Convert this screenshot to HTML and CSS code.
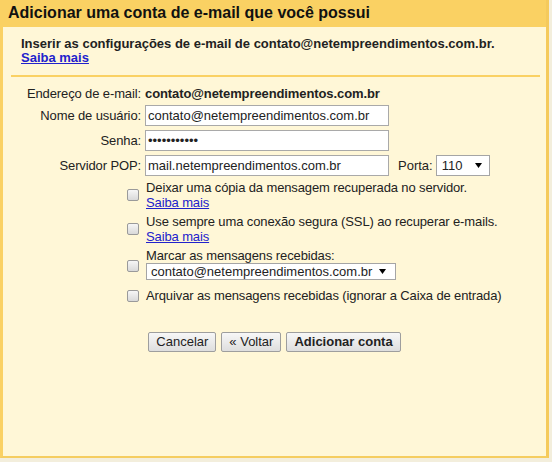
FILE: index.html
```html
<!DOCTYPE html>
<html lang="pt-BR">
<head>
<meta charset="utf-8">
<title>Adicionar uma conta de e-mail que você possui</title>
<link rel="stylesheet" href="styles.css">
</head>
<body>
<div class="dialog">
  <div class="dialog-header">Adicionar uma conta de e-mail que você possui</div>
  <div class="dialog-body">
    <div class="intro">
      Inserir as configurações de e-mail de contato@netempreendimentos.com.br.<br>
      <a href="#" class="link link-bold">Saiba mais</a>
    </div>
    <form class="form">
      <div class="label">Endereço de e-mail:</div>
      <div class="value">contato@netempreendimentos.com.br</div>

      <label class="label label-input" for="user">Nome de usuário:</label>
      <div class="control"><input id="user" class="text" type="text" value="contato@netempreendimentos.com.br"></div>

      <label class="label label-input" for="pass">Senha:</label>
      <div class="control"><input id="pass" class="text" type="password" value="abcdefghijk"></div>

      <label class="label label-input" for="pop">Servidor POP:</label>
      <div class="control">
        <input id="pop" class="text" type="text" value="mail.netempreendimentos.com.br">
        <span class="port-label">Porta:</span>
        <span class="select select-port"><span class="select-value">110</span><svg class="arrow" width="7" height="5" viewBox="0 0 7 5"><polygon points="0,0 7,0 3.5,5" fill="#000"/></svg></span>
      </div>

      <div class="check-cell"><input class="check" type="checkbox"></div>
      <div class="check-text">Deixar uma cópia da mensagem recuperada no servidor.<br><a class="link" href="#">Saiba mais</a></div>

      <div class="check-cell"><input class="check" type="checkbox"></div>
      <div class="check-text">Use sempre uma conexão segura (SSL) ao recuperar e-mails.<br><a class="link" href="#">Saiba mais</a></div>

      <div class="check-cell"><input class="check" type="checkbox"></div>
      <div class="check-text">Marcar as mensagens recebidas:<br><span class="select select-label"><span class="select-value">contato@netempreendimentos.com.br</span><svg class="arrow" width="7" height="5" viewBox="0 0 7 5"><polygon points="0,0 7,0 3.5,5" fill="#000"/></svg></span></div>

      <div class="check-cell"><input class="check" type="checkbox"></div>
      <div class="check-text">Arquivar as mensagens recebidas (ignorar a Caixa de entrada)</div>
    </form>
    <div class="buttons">
      <button type="button" class="btn">Cancelar</button>
      <button type="button" class="btn">« Voltar</button>
      <button type="button" class="btn btn-primary">Adicionar conta</button>
    </div>
  </div>
</div>
</body>
</html>
```
FILE: styles.css
```css
* { box-sizing: border-box; }
html, body { margin: 0; padding: 0; }
body {
  width: 552px;
  height: 462px;
  overflow: hidden;
  background: #f3eedc;
  font-family: "Liberation Sans", Arial, sans-serif;
  font-size: 13px;
  color: #222;
}
.dialog {
  width: 549px;
  height: 458px;
  background: #fff7d7;
  border-left: 3px solid #fad163;
  border-right: 3px solid #f5ca5c;
  border-bottom: 2px solid #f5cd60;
}
.dialog-header {
  height: 27px;
  line-height: 26px;
  padding-left: 5px;
  background: #fad163;
  font-size: 16px;
  font-weight: bold;
  color: #111;
  white-space: nowrap;
}
.intro {
  margin: 0 6px 0 8px;
  padding: 10px 0 10px 10px;
  line-height: 14px;
  font-weight: bold;
  color: #222;
  border-bottom: 2px solid #fad163;
}
.link { color: #2222cc; text-decoration: underline; }
.link-bold { font-weight: bold; }
.form {
  display: grid;
  grid-template-columns: 138px 400px;
  column-gap: 4px;
  row-gap: 4px;
  padding-top: 9px;
  line-height: 15px;
}
.label { text-align: right; color: #222; letter-spacing: -0.12px; }
.label-input { align-self: center; }
.value { font-weight: bold; color: #222; letter-spacing: -0.1px; }
.control { display: flex; align-items: center; height: 21px; }
.text {
  width: 244px;
  height: 21px;
  margin: 0;
  padding: 0 2px;
  border: 1px solid #a9a9a9;
  background: #fff;
  font-family: "Liberation Sans", Arial, sans-serif;
  font-size: 13px;
  line-height: 19px;
  color: #222;
  outline: none;
}
.port-label { margin-left: 9px; color: #222; }
.select {
  display: flex;
  align-items: center;
  justify-content: space-between;
  background: #fff;
  border: 1px solid #a5a5a5;
  color: #222;
}
.select-port { width: 54px; height: 21px; margin-left: 3px; padding: 0 7px 0 5px; }
.select-label { width: 250px; height: 17px; margin-bottom: 4px; padding: 0 9px 0 4px; line-height: 15px; }
.arrow { display: block; flex: none; }
.check-cell { display: flex; align-items: center; justify-content: flex-end; padding-right: 2px; }
.check {
  -webkit-appearance: none;
  appearance: none;
  width: 12px;
  height: 12px;
  margin: 0;
  border: 1px solid #9a9a9a;
  border-radius: 2px;
  background: linear-gradient(#f6f6f6, #d9d9d9);
}
.check-text { padding-left: 1px; color: #222; letter-spacing: -0.12px; }
.select-label .select-value { letter-spacing: 0; }
.buttons {
  display: flex;
  justify-content: center;
  gap: 5px;
  margin-top: 29px;
}
.btn {
  height: 20px;
  margin: 0;
  padding: 0 7px;
  border: 1px solid #9e9e9e;
  border-radius: 2px;
  background: linear-gradient(#f7f7f7, #dedede);
  font-family: "Liberation Sans", Arial, sans-serif;
  font-size: 13px;
  line-height: 18px;
  color: #222;
}
.btn-primary { font-weight: bold; }
```
